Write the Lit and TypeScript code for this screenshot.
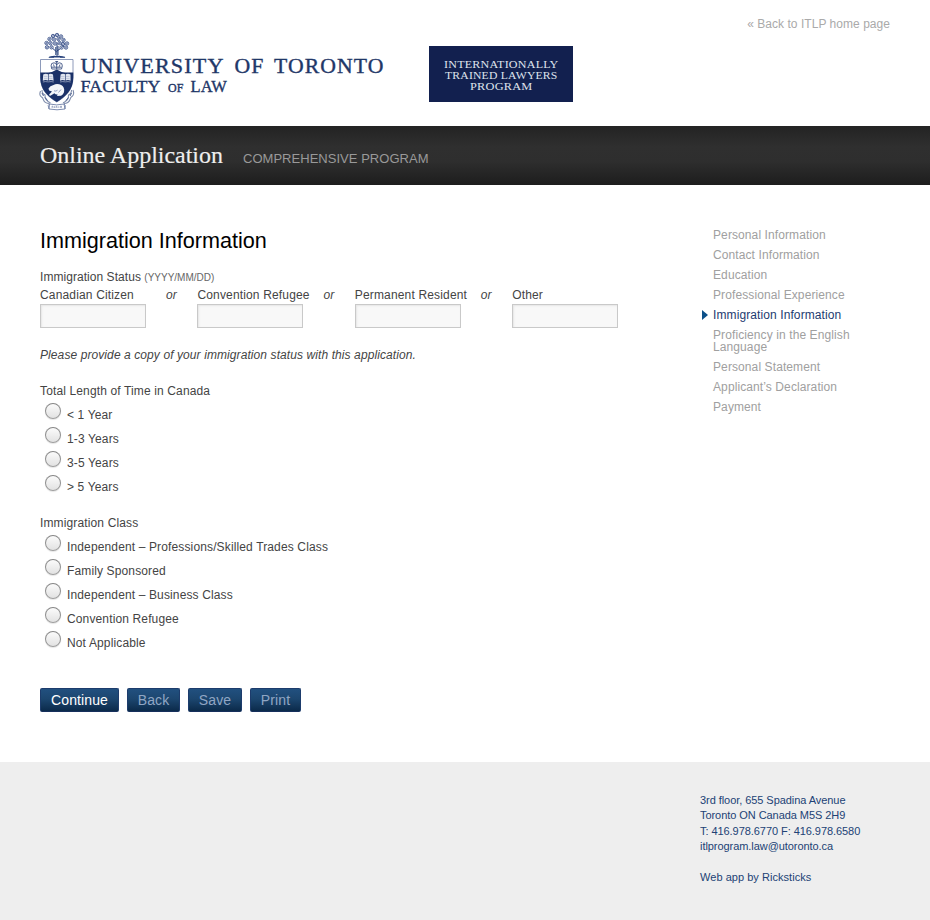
import { LitElement, html, css, svg } from "lit";
import { customElement, property } from "lit/decorators.js";
import { classMap } from "lit/directives/class-map.js";

/** University crest and wordmark. */
@customElement("uoft-logo")
export class UoftLogo extends LitElement {
  static styles = css`
    :host { display: block; width: 348px; height: 81px; }
    svg { display: block; width: 348px; height: 81px; }
    text { font-family: "Liberation Serif", serif; fill: #1f3768; stroke: #1f3768; stroke-width: 0.35; }
    .wide { font-size: 20px; letter-spacing: 1px; }
  `;

  private leaf(x: number, y: number, r = 1.7) {
    return svg`<g transform="translate(${x} ${y})">
      <circle r=${r} fill="#f3f5f9" stroke="#3c538a" stroke-width=".9"></circle>
      <path d="M-1.2 .6L1.2-.6M0-1v2" stroke="#4a6095" stroke-width=".6"></path></g>`;
  }

  render() {
    const leaves = [
      [53, 36], [57, 35], [61, 36.5], [49.5, 39], [54, 39.5], [58.5, 39], [63.5, 40],
      [46.5, 43], [50.5, 43.2], [55, 43.5], [59.5, 43], [63, 44], [67, 43.5],
      [47, 47.3], [51.5, 47.3], [61.5, 47.5], [66, 47.5],
    ];
    return html`<svg viewBox="38 31 348 81" role="img" aria-label="University of Toronto Faculty of Law">
      <g fill="none" stroke="#26407a" stroke-width="1">
        <path d="M57 43v13M56.8 52L50 46M57 51l7-5M55.8 47v8M58 46v9" stroke-width="1"></path>
        ${leaves.map(([x, y]) => this.leaf(x, y))}
        <path d="M48 57.500q4-2.300 8.500-1.500q5-.8 9 1.500z" fill="#26407a" stroke="none"></path>
        <path d="M49 57.200h5M60 57.200h5" stroke-width="1"></path>
      </g>
      <path d="M40.500 91q-1.500 4 .5 5.500q2 1 2.500 3.500q1.500 3.500 6 3.500M73 90q1.500 4-.5 6q-2 1-2.500 3.500q-1.500 4-6 4M42 90q0 4 3 5q-.5 5 5.500 8M71.500 90q0 4-3 5q.5 5-5.500 8" fill="none" stroke="#7f8dac" stroke-width="1.100"></path>
      <path d="M42 93l1.500 3M45 97.500l2.500 3M71.500 93l-1.500 3M68.500 97.500l-2.500 3" stroke="#4d6090" stroke-width="1" fill="none"></path>
      <path d="M40.500 59.500h32.500v17c0 14-7.500 20-16.200 25.500C48 96.500 40.500 90.500 40.500 76.500z" fill="#fff" stroke="#7182a8" stroke-width=".8"></path>
      <path d="M40.300 72.500h8q4 0 8.500-3q4.500 3 8.500 3h8v5c0 13-8 19-16.500 24.500C48.200 96.500 40.300 90.500 40.300 77.500z" fill="#1b3168"></path>
      <g fill="none" stroke="#3c5182" stroke-width=".9">
        <path d="M51.800 69l-.7-3.200q-.3-3 2.900-3q2 .2 2.700 2.200q.8-2 2.800-2.200q3 0 2.800 3l-.8 3.200zM51.800 67.200h9.500M56.700 61v8M53.500 64.500l.8 2.300M60 64.500l-.8 2.300"></path>
        <path d="M55.300 61.700h2.800" stroke-width="1.200"></path>
      </g>
      <g fill="#dfe4ee">
        <path d="M43.200 74.500q2.600-1.300 4.800-.2v6.200q-2.400-1.200-5.200.2zM48.600 74.300q2.300-1.100 4.400.2l.6 6.200q-2.500-1.400-5-.2z"></path>
        <path d="M60.600 74.500q2.300-1.300 4.500-.2v6.200q-2.500-1.200-5.100.2zM65.700 74.300q2.400-1.100 4.800.2l.1 6.200q-2.500-1.400-4.900-.2z"></path>
      </g>
      <path d="M42.800 82q2.500-.8 5.400-.1 3-.7 5.600.1M60 82q2.600-.8 5.300-.1 2.900-.7 5.300.1" fill="none" stroke="#aab5cf" stroke-width=".7"></path>
      <path d="M44 76.500h3.500M49 76.500h3.500M44 78.500h3.500M49 78.500h3.500M61 76.500h3.500M66 76.500h3.500M61 78.500h3.500M66 78.500h3.500" stroke="#a6b1cc" stroke-width=".5"></path>
      <path d="M48.500 88.500q1.500-2.800 5-3.600q2.700-1.600 5.800-.7q4.200.9 4.900 5.300q.2 4.500-3.200 6.200l-4 .4.7-1.600q-2.200.3-3.300-1.300l-4 2.500q-2.200-.3-.8-1.700l2.400-2.600-2.900-.9z" fill="#f4f6fa"></path>
      <path d="M54 90.800q2 .9 3.500-.6M58.500 92.500l2.500-3" stroke="#7787ad" stroke-width=".8" fill="none"></path>
      <path d="M49.500 104q7 1.800 14.500 0l1 5q-8 1.600-16 0zM49.500 104l-1.300 1.500.8 3.500M64 104l1.300 1.500-.3 3.500" fill="#fff" stroke="#6e7fa6" stroke-width=".9"></path>
      <path d="M52 107.800v-1.700l1 .2v1.600M54.500 108v-1.800M56 108v-1.700h1v1.700M58.800 108v-1.800M60.500 107.900v-1.800h1v1.800" fill="none" stroke="#7282a8" stroke-width=".6"></path>

      <text class="wide" x="80.500" y="72.700" textLength="144" lengthAdjust="spacingAndGlyphs">UNIVERSITY</text>
      <text class="wide" x="234.500" y="72.700" textLength="30" lengthAdjust="spacingAndGlyphs">OF</text>
      <text class="wide" x="274" y="72.700" textLength="110.500" lengthAdjust="spacingAndGlyphs">TORONTO</text>
      <text x="80.500" y="91.500" font-size="16.800" textLength="80" lengthAdjust="spacingAndGlyphs">FACULTY</text>
      <text x="168" y="91.500" font-size="11.500" textLength="15.500" lengthAdjust="spacingAndGlyphs">OF</text>
      <text x="190.500" y="91.500" font-size="16.800" textLength="36.500" lengthAdjust="spacingAndGlyphs">LAW</text>
    </svg>`;
  }
}

/** Programme badge shown beside the wordmark. */
@customElement("program-badge")
export class ProgramBadge extends LitElement {
  static styles = css`
    :host { display: block; width: 144px; height: 56px; background: #12204f; }
    svg { display: block; width: 144px; height: 56px; }
    text { font-family: "Liberation Serif", serif; font-size: 11px; fill: #dfe3ec; letter-spacing: 0.2px; }
  `;
  render() {
    return html`<svg viewBox="0 0 144 56">
      <text x="15" y="22" textLength="114.500" lengthAdjust="spacingAndGlyphs">INTERNATIONALLY</text>
      <text x="16" y="33" textLength="112.500" lengthAdjust="spacingAndGlyphs">TRAINED LAWYERS</text>
      <text x="41" y="44" textLength="62.500" lengthAdjust="spacingAndGlyphs">PROGRAM</text>
    </svg>`;
  }
}

/** Titled group of radio choices. */
@customElement("radio-group")
export class RadioGroup extends LitElement {
  @property() heading = "";
  @property({ attribute: false }) options: string[] = [];

  static styles = css`
    :host { display: block; letter-spacing: 0.135px; }
    .title { line-height: 18px; height: 18px; }
    .option { display: flex; height: 24px; padding-left: 5px; }
    input {
      appearance: none; box-sizing: border-box; margin: 3px 6px 0 0;
      width: 16px; height: 16px; border-radius: 50%;
      border: 1px solid #8f8f8f; border-top-color: #858585; border-bottom-color: #9d9d9d;
      background: linear-gradient(#fbfbfb, #e2e2e2);
      box-shadow: 0 1px 1px rgba(0, 0, 0, 0.1);
    }
    .name { padding-top: 6px; line-height: 18px; }
  `;
  render() {
    return html`<div class="title">${this.heading}</div>
      ${this.options.map((o) => html`<label class="option">
        <input type="radio" name="choice" /><span class="name">${o}</span></label>`)}`;
  }
}

@customElement("app-root")
export class AppRoot extends LitElement {
  static styles = css`
    :host {
      display: block; height: 920px; background: #fff; color: #444;
      font: 12px/18px "Liberation Sans", Arial, sans-serif; letter-spacing: 0.1px;
    }
    a { color: inherit; text-decoration: none; }
    .header { display: flex; height: 126px; padding: 0 40px 0 38px; box-sizing: border-box; }
    .logo { margin-top: 31px; }
    .badge { margin: 46px 0 0 43px; }
    .back { margin: 15px 0 0 auto; color: #aaa; letter-spacing: 0.04px; }
    .bar {
      display: flex; align-items: baseline; height: 59px; padding: 0 40px; box-sizing: border-box;
      background: linear-gradient(#232323, #2f2f2f 35%, #2e2e2e 60%, #1d1d1d);
    }
    .bar-title {
      font: 24px/58px "Liberation Serif", serif; color: #eee; letter-spacing: -0.02px; width: 203px;
      -webkit-text-stroke: 0.15px #eee;
    }
    .bar-sub { font-size: 13px; color: #999; letter-spacing: 0.03px; }
    .body { display: flex; height: 577px; box-sizing: border-box; padding: 43px 0 0 40px; }
    .form { width: 660px; }
    h1 { margin: 0; font-size: 21.6px; font-weight: 400; line-height: 26px; color: #000; letter-spacing: 0; }
    .label { margin-top: 14px; height: 18px; letter-spacing: 0.05px; }
    .hint { font-size: 10px; color: #666; letter-spacing: 0; }
    .fields { display: flex; }
    .field { width: 157.400px; }
    .caption { display: flex; height: 18px; white-space: nowrap; letter-spacing: 0.16px; }
    .caption-name { width: 126px; }
    .or { font-style: italic; }
    .field input {
      display: block; box-sizing: border-box; width: 106px; height: 24px; border: 1px solid #c9c9c9;
      background: #f8f8f8; box-shadow: inset 1px 1px 2px #e6e6e6; padding: 0; border-radius: 0;
    }
    .note { font-style: italic; margin: 18px 0; letter-spacing: 0.09px; }
    .time { margin-bottom: 18px; }
    .actions { display: flex; gap: 8px; margin-top: 36px; }
    button {
      height: 24px; padding: 0; border: 1px solid #1d3c6c; border-bottom-color: #16305c; border-radius: 2px;
      background: linear-gradient(#21507f, #1c466f 45%, #0b2a4a); color: #90a6c4;
      font: 14px/22px "Liberation Sans", Arial, sans-serif; letter-spacing: 0.1px; flex: none;
    }
    .primary { width: 79px; color: #fff; }
    .w53 { width: 53px; } .w54 { width: 54px; } .w51 { width: 51px; }
    .steps { list-style: none; margin: -3px 0 0; padding: 0; width: 160px; }
    .step { position: relative; padding: 4px 0 4px 13px; line-height: 12px; color: #a0a0a0; }
    .step.active { color: #1d3b70; }
    .step.active::before {
      content: ""; position: absolute; left: 2px; top: 5px;
      border: 5px solid transparent; border-left: 6px solid #0c5089; border-right: 0;
    }
    .footer {
      height: 158px; box-sizing: border-box; padding: 30.700px 0 0 700px; background: #eee;
      color: #214275; font-size: 11px; line-height: 15.400px; letter-spacing: -0.06px;
    }
    .credit { margin-top: 15.400px; letter-spacing: 0.04px; }
  `;

  private statuses = ["Canadian Citizen", "Convention Refugee", "Permanent Resident", "Other"];
  private steps = [
    "Personal Information", "Contact Information", "Education", "Professional Experience",
    "Immigration Information", "Proficiency in the English Language", "Personal Statement",
    "Applicant’s Declaration", "Payment",
  ];

  render() {
    return html`
      <header class="header">
        <uoft-logo class="logo"></uoft-logo>
        <program-badge class="badge"></program-badge>
        <a class="back" href="#">« Back to ITLP home page</a>
      </header>
      <div class="bar"><span class="bar-title">Online Application</span><span class="bar-sub">COMPREHENSIVE PROGRAM</span></div>
      <div class="body">
        <main class="form">
          <h1>Immigration Information</h1>
          <div class="label">Immigration Status <span class="hint">(YYYY/MM/DD)</span></div>
          <div class="fields">
            ${this.statuses.map((s, i) => html`<div class="field">
              <div class="caption"><span class="caption-name">${s}</span>${i < 3 ? html`<span class="or">or</span>` : null}</div>
              <input type="text" aria-label=${s} />
            </div>`)}
          </div>
          <div class="note">Please provide a copy of your immigration status with this application.</div>
          <radio-group class="time" heading="Total Length of Time in Canada"
            .options=${["< 1 Year", "1-3 Years", "3-5 Years", "> 5 Years"]}></radio-group>
          <radio-group heading="Immigration Class"
            .options=${["Independent – Professions/Skilled Trades Class", "Family Sponsored",
              "Independent – Business Class", "Convention Refugee", "Not Applicable"]}></radio-group>
          <div class="actions">
            <button class="primary">Continue</button><button class="w53">Back</button>
            <button class="w54">Save</button><button class="w51">Print</button>
          </div>
        </main>
        <ul class="steps">
          ${this.steps.map((s, i) => html`<li class=${classMap({ step: true, active: i === 4 })}>${s}</li>`)}
        </ul>
      </div>
      <footer class="footer">
        <div>3rd floor, 655 Spadina Avenue</div>
        <div>Toronto ON Canada M5S 2H9</div>
        <div>T: 416.978.6770 F: 416.978.6580</div>
        <div>itlprogram.law@utoronto.ca</div>
        <div class="credit">Web app by Ricksticks</div>
      </footer>`;
  }
}
